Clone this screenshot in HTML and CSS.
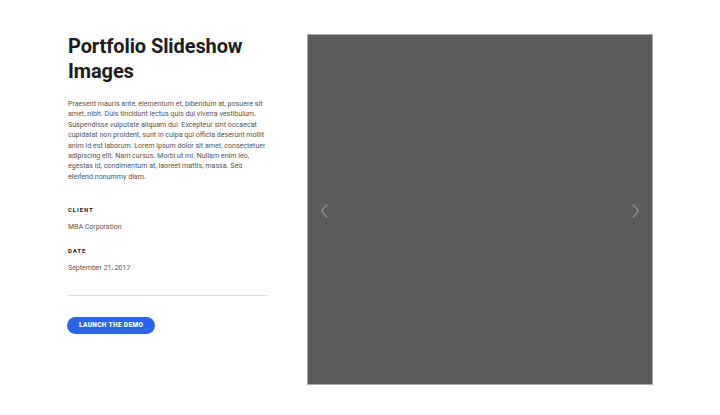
FILE: index.html
```html
<!DOCTYPE html>
<html>
<head>
<meta charset="utf-8">
<link rel="stylesheet" href="styles.css">
</head>
<body>
<div class="page">
  <div class="info">
    <h1 class="title">Portfolio Slideshow Images</h1>
    <p class="desc">Praesent mauris ante, elementum et, bibendum at, posuere sit amet, nibh. Duis tincidunt lectus quis dui viverra vestibulum. Suspendisse vulputate aliquam dui. Excepteur sint occaecat cupidatat non proident, sunt in culpa qui officia deserunt mollit anim id est laborum. Lorem ipsum dolor sit amet, consectetuer adipiscing elit. Nam cursus. Morbi ut mi. Nullam enim leo, egestas id, condimentum at, laoreet mattis, massa. Sed eleifend nonummy diam.</p>
    <div class="meta">
      <div class="label">CLIENT</div>
      <div class="value">MBA Corporation</div>
      <div class="label">DATE</div>
      <div class="value">September 21, 2017</div>
    </div>
    <hr class="divider">
    <a class="btn" href="#">LAUNCH THE DEMO</a>
  </div>
  <div class="slider">
    <svg class="arrow" width="10" height="16" viewBox="0 0 10 16"><path d="M8 1.5 L2.5 8 L8 14.5" fill="none" stroke="#8a8a8a" stroke-width="1.6"/></svg>
    <svg class="arrow" width="10" height="16" viewBox="0 0 10 16"><path d="M2 1.5 L7.5 8 L2 14.5" fill="none" stroke="#8a8a8a" stroke-width="1.6"/></svg>
  </div>
</div>
</body>
</html>
```
FILE: styles.css
```css
html, body {
  margin: 0;
  padding: 0;
  background: #fff;
}
body {
  font-family: Roboto, "Liberation Sans", sans-serif;
}
.page {
  display: flex;
  padding: 34px 67px 0 68px;
  gap: 39px;
  align-items: flex-start;
}
.info {
  width: 200px;
  flex: none;
}
.title {
  margin: 0;
  font-size: 20px;
  line-height: 25px;
  font-weight: 700;
  color: #1c1c1c;
  letter-spacing: -0.1px;
}
.desc {
  margin: 15px 0 0;
  font-size: 7.1px;
  line-height: 10.4px;
  color: #555;
}
.meta {
  margin-top: 23px;
}
.label {
  font-size: 6px;
  font-weight: 700;
  letter-spacing: 0.9px;
  color: #222;
  line-height: 10px;
}
.value {
  font-size: 7px;
  line-height: 10px;
  color: #555;
  margin-top: 7px;
  margin-bottom: 14px;
}
.divider {
  border: 0;
  border-top: 1px solid #e3e3e3;
  margin: 22px 0 0 -1px;
  width: 201px;
}
.btn {
  display: inline-block;
  margin-top: 21px;
  margin-left: -1px;
  background: #2b66e8;
  color: #fff;
  font-size: 6.5px;
  font-weight: 900;
  letter-spacing: 0.35px;
  text-decoration: none;
  height: 17px;
  line-height: 17px;
  padding: 0 12px;
  border-radius: 9px;
}
.slider {
  width: 322px;
  height: 349px;
  flex: none;
  background: #5c5c5c;
  border: 1px solid #a8a8a8;
  display: flex;
  align-items: center;
  justify-content: space-between;
  padding: 0 11px;
}
.arrow {
  display: block;
  margin-top: 2px;
}
```
